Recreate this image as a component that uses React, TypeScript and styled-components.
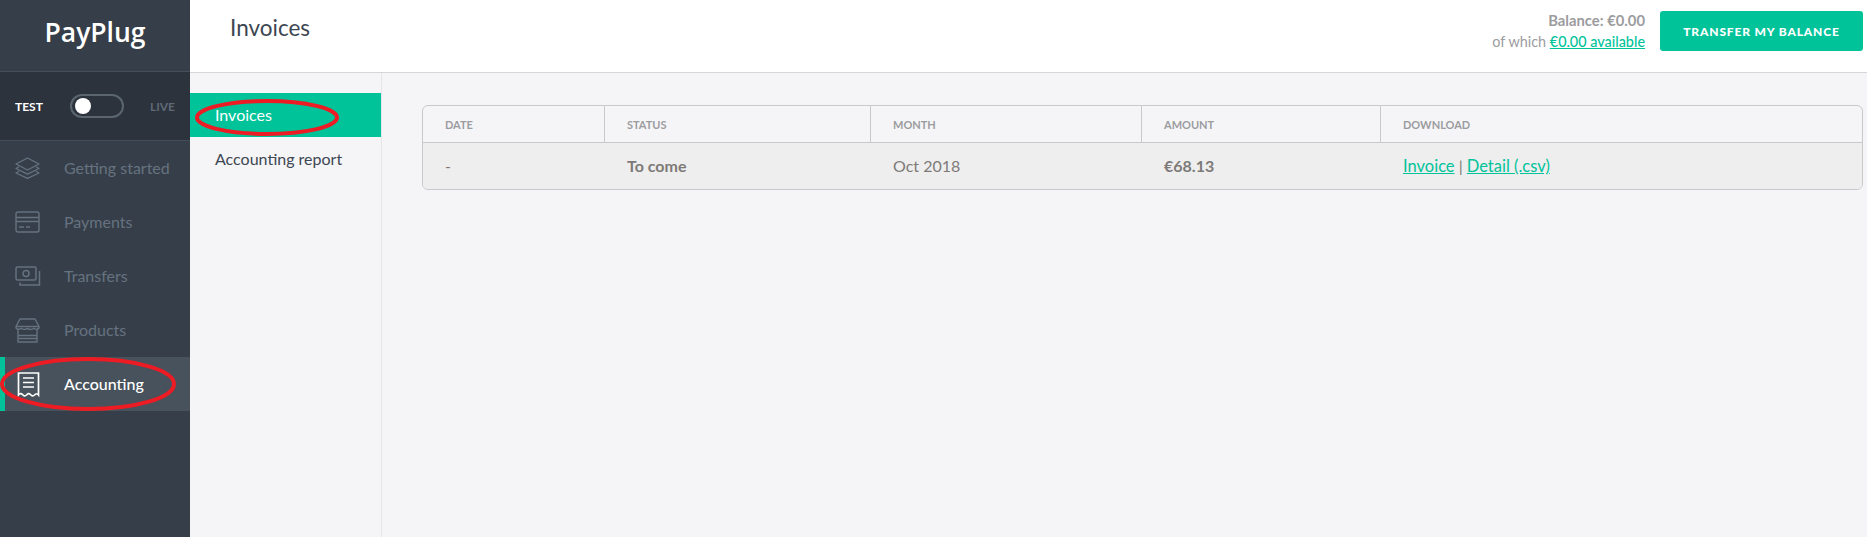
import styled, { createGlobalStyle } from 'styled-components';

const GlobalStyle = createGlobalStyle`
  html, body {
    margin: 0;
    padding: 0;
    background: #f5f5f8;
  }
  body {
    font-family: 'Lato', 'Liberation Sans', sans-serif;
    overflow: hidden;
  }
  * { box-sizing: border-box; }
`;

const GREEN = '#00c39a';

const navItems = [
  { label: 'Getting started', icon: <LayersIcon /> },
  { label: 'Payments', icon: <CardIcon /> },
  { label: 'Transfers', icon: <CashIcon /> },
  { label: 'Products', icon: <ShopIcon /> },
  { label: 'Accounting', icon: <ReceiptIcon />, active: true },
];

const columns = ['Date', 'Status', 'Month', 'Amount', 'Download'];

export default function App() {
  return (
    <Page>
      <GlobalStyle />
      <Sidebar>
        <Logo>PayPlug</Logo>
        <ModeSwitch>
          <ModeLabel $on>TEST</ModeLabel>
          <Toggle><Knob /></Toggle>
          <ModeLabel>LIVE</ModeLabel>
        </ModeSwitch>
        <Nav>
          {navItems.map((item) => (
            <NavItem key={item.label} $active={item.active}>
              <NavIcon $active={item.active}>{item.icon}</NavIcon>
              <NavLabel>{item.label}</NavLabel>
            </NavItem>
          ))}
        </Nav>
      </Sidebar>

      <Content>
        <Header>
          <Title>Invoices</Title>
          <BalanceBox>
            <Balance>
              <BalanceTotal>Balance: €0.00</BalanceTotal>
              <div>of which <GreenLink href="#">€0.00 available</GreenLink></div>
            </Balance>
            <TransferButton>TRANSFER MY BALANCE</TransferButton>
          </BalanceBox>
        </Header>

        <Body>
          <SubNav>
            <SubNavItem $active>Invoices</SubNavItem>
            <SubNavItem>Accounting report</SubNavItem>
          </SubNav>
          <Main>
            <Table>
              <HeadRow>
                {columns.map((c) => <HeadCell key={c}>{c}</HeadCell>)}
              </HeadRow>
              <DataRow>
                <DataCell>-</DataCell>
                <DataCell $bold>To come</DataCell>
                <DataCell>Oct 2018</DataCell>
                <DataCell $bold>€68.13</DataCell>
                <DataCell>
                  <TableLink href="#">Invoice</TableLink> | <TableLink href="#">Detail (.csv)</TableLink>
                </DataCell>
              </DataRow>
            </Table>
          </Main>
        </Body>
      </Content>

      {/* red annotations drawn on top of the screenshot */}
      <Annotation width="1867" height="537" viewBox="0 0 1867 537">
        <ellipse cx="267" cy="117.5" rx="70" ry="16.5" fill="none" stroke="#ed1c24" strokeWidth="4" />
        <ellipse cx="88" cy="384" rx="86" ry="25" fill="none" stroke="#ed1c24" strokeWidth="4" />
      </Annotation>
    </Page>
  );
}

function LayersIcon() {
  return (
    <svg width="25" height="22" viewBox="0 0 25 22" fill="none" stroke="currentColor" strokeWidth="1.3" strokeLinejoin="round">
      <path d="M12.5 1 L24 7 L12.5 13 L1 7 Z" />
      <path d="M4 9.8 L1 11.5 L12.5 17.2 L24 11.5 L21 9.8" />
      <path d="M4 14.3 L1 16 L12.5 21.3 L24 16 L21 14.3" />
    </svg>
  );
}

function CardIcon() {
  return (
    <svg width="25" height="22" viewBox="0 0 25 22" fill="none" stroke="currentColor" strokeWidth="1.4">
      <rect x="1" y="1" width="23" height="20" rx="2" />
      <path d="M1 6.5 H24 M1 10.5 H24" />
      <path d="M4 16 H9 M11 16 H15" />
    </svg>
  );
}

function CashIcon() {
  return (
    <svg width="26" height="20" viewBox="0 0 26 20" fill="none" stroke="currentColor" strokeWidth="1.5">
      <rect x="1" y="1" width="20" height="13" rx="1.5" />
      <circle cx="11" cy="7.5" r="3" />
      <path d="M24.5 5 V19 H5 V16.5" />
    </svg>
  );
}

function ShopIcon() {
  return (
    <svg width="25" height="25" viewBox="0 0 25 25" fill="none" stroke="currentColor" strokeWidth="1.4" strokeLinejoin="round">
      <path d="M5 1 H20 L24 8.5 V10 Q22 12.5 19 10.3 Q16 12.5 12.5 10.3 Q9 12.5 6 10.3 Q3 12.5 1 10 V8.5 Z" />
      <path d="M1 8.5 H24" />
      <path d="M3 12 V24 H22 V12" />
      <path d="M3 17.5 H22 M3 20.5 H22" />
    </svg>
  );
}

function ReceiptIcon() {
  return (
    <svg width="23" height="25" viewBox="0 0 23 25" fill="none" stroke="currentColor" strokeWidth="1.7">
      <path d="M1.5 1 H21.5 V23 Q19.5 20.5 17.5 23 Q15.5 25 13.5 22.5 Q11.5 20.5 9.5 23 Q7.5 25 5.5 22.5 Q3.5 20.5 1.5 23 Z" />
      <path d="M6 6 H17 M6 10.5 H17 M6 15 H17" />
    </svg>
  );
}

const Page = styled.div`
  display: flex;
  width: 1867px;
  height: 537px;
  overflow: hidden;
  position: relative;
`;

const Sidebar = styled.aside`
  display: flex;
  flex-direction: column;
  flex: 0 0 190px;
  background: #363f49;
`;

const Logo = styled.div`
  height: 71px;
  padding-top: 14px;
  text-align: center;
  font-family: 'Open Sans', sans-serif;
  font-size: 26.5px;
  font-weight: 600;
  line-height: 36px;
  color: #fff;
`;

const ModeSwitch = styled.div`
  display: flex;
  align-items: center;
  justify-content: space-between;
  height: 70px;
  padding: 0 15px;
  background: #2c333d;
  border-top: 1px solid #444e59;
  border-bottom: 1px solid #444e59;
`;

const ModeLabel = styled.span<{ $on?: boolean }>`
  font-size: 12px;
  font-weight: 700;
  color: ${(p) => (p.$on ? '#fff' : '#5f6975')};
`;

const Toggle = styled.div`
  display: flex;
  align-items: center;
  width: 54px;
  height: 24px;
  margin-left: 2px;
  padding: 0 3px;
  border: 2px solid #5a6570;
  border-radius: 12px;
`;

const Knob = styled.div`
  width: 16px;
  height: 16px;
  border-radius: 50%;
  background: #fff;
`;

const Nav = styled.nav`
  display: flex;
  flex-direction: column;
`;

const NavItem = styled.div<{ $active?: boolean }>`
  display: flex;
  align-items: center;
  height: 54px;
  padding-left: ${(p) => (p.$active ? '12px' : '15px')};
  border-left: ${(p) => (p.$active ? `5px solid ${GREEN}` : 'none')};
  background: ${(p) => (p.$active ? '#47525c' : 'transparent')};
  color: ${(p) => (p.$active ? '#fff' : '#667280')};
  font-size: 16px;
  font-weight: ${(p) => (p.$active ? 500 : 400)};
`;

const NavIcon = styled.span<{ $active?: boolean }>`
  display: flex;
  flex: 0 0 auto;
  align-items: center;
  width: ${(p) => (p.$active ? '47px' : '49px')};
`;

const NavLabel = styled.span`
  margin-bottom: 2px;
`;

const Content = styled.div`
  display: flex;
  flex-direction: column;
  flex: 1;
  min-width: 0;
`;

const Header = styled.header`
  display: flex;
  align-items: center;
  justify-content: space-between;
  height: 73px;
  padding: 0 4px 10px 40px;
  background: #fff;
  border-bottom: 1px solid #d6d6d8;
`;

const Title = styled.h1`
  margin: 0 0 8px;
  font-size: 22.5px;
  font-weight: 400;
  color: #3d4652;
`;

const BalanceBox = styled.div`
  display: flex;
  align-items: center;
  gap: 15px;
`;

const Balance = styled.div`
  text-align: right;
  font-size: 14.4px;
  line-height: 21px;
  color: #9c9c9f;
`;

const BalanceTotal = styled.div`
  font-size: 14.8px;
  font-weight: 700;
`;

const GreenLink = styled.a`
  color: ${GREEN};
  font-weight: 500;
  text-decoration: underline;
`;

const TableLink = styled(GreenLink)`
  font-size: 16.5px;
  font-weight: 400;
`;

const TransferButton = styled.button`
  width: 203px;
  height: 40px;
  padding: 1px 0 0;
  border: none;
  border-radius: 3px;
  background: ${GREEN};
  color: #fff;
  font-family: inherit;
  font-size: 12px;
  font-weight: 900;
  letter-spacing: 0.85px;
`;

const Body = styled.div`
  display: flex;
  flex: 1;
  min-height: 0;
`;

const SubNav = styled.div`
  display: flex;
  flex-direction: column;
  flex: 0 0 192px;
  padding-top: 20px;
  border-right: 1px solid #e6e6e9;
`;

const SubNavItem = styled.div<{ $active?: boolean }>`
  height: 44px;
  padding-left: 25px;
  line-height: 44px;
  font-size: 16px;
  background: ${(p) => (p.$active ? GREEN : 'transparent')};
  color: ${(p) => (p.$active ? '#fff' : '#3d4652')};
`;

const Main = styled.main`
  flex: 1;
  min-width: 0;
  padding: 32px 4px 0 40px;
`;

const Table = styled.div`
  border: 1px solid #c9c9cc;
  border-radius: 6px;
  overflow: hidden;
`;

const gridColumns = '182px 266px 271px 239px 1fr';

const HeadRow = styled.div`
  display: grid;
  grid-template-columns: ${gridColumns};
  height: 37px;
  border-bottom: 1px solid #c9c9cc;
`;

const HeadCell = styled.div`
  display: flex;
  align-items: center;
  padding-left: 22px;
  border-right: 1px solid #c9c9cc;
  font-size: 11px;
  font-weight: 700;
  text-transform: uppercase;
  color: #9c9c9f;
  &:last-child { border-right: none; }
`;

const DataRow = styled.div`
  display: grid;
  grid-template-columns: ${gridColumns};
  height: 46px;
  background: #eeeeee;
`;

const DataCell = styled.div<{ $bold?: boolean }>`
  padding-left: 22px;
  font-size: 16px;
  line-height: 45px;
  font-weight: ${(p) => (p.$bold ? 700 : 400)};
  color: #7d7a78;
`;

const Annotation = styled.svg`
  position: absolute;
  top: 0;
  left: 0;
  pointer-events: none;
`;
